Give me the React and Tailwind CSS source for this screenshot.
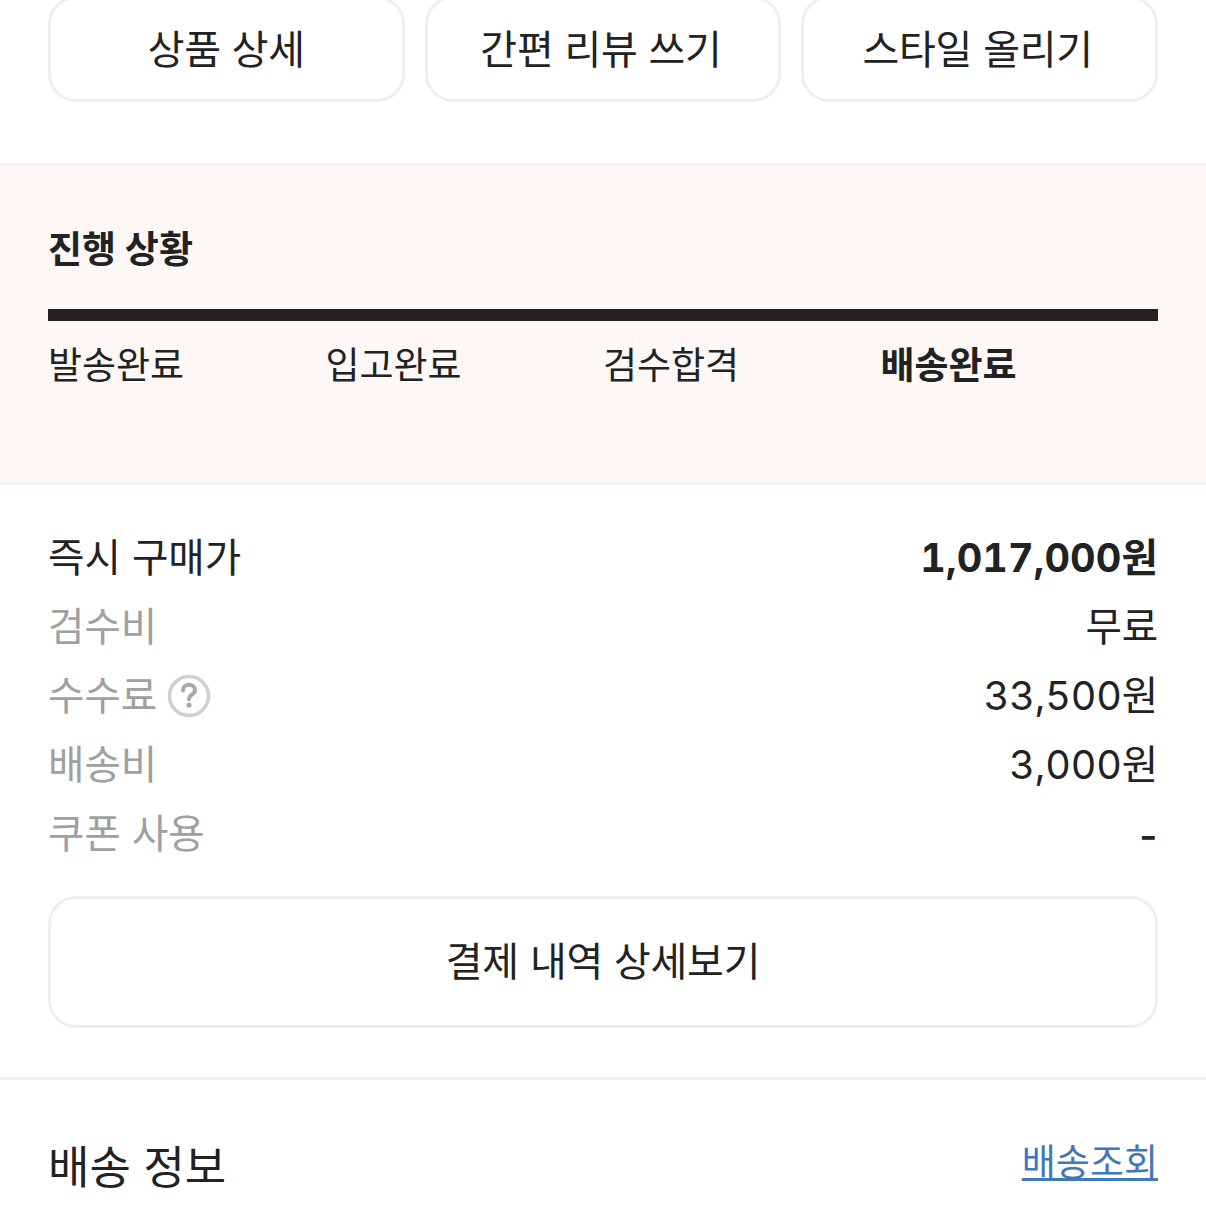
import React from 'react'

const font = "font-['Inter','Noto_Sans_CJK_KR',sans-serif]"

function ActionButton({ label, shift }) {
  return (
    <button className={`h-[106px] -mt-[4px] pt-[2px] border-[3px] border-[#eeeeee] rounded-[28px] bg-white text-[40px] tracking-[-0.25px] text-[#222] ${shift ? 'pr-[4px]' : ''}`}>
      {label}
    </button>
  )
}

function PriceRow({ label, value, strong, help, muted = true, dash }) {
  return (
    <div className="flex items-center justify-between h-[69px]">
      <div className={`flex items-center gap-[10px] text-[39.6px] ${muted ? 'text-[#a0a0a0]' : 'text-[#222]'}`}>
        {label}
        {help && (
          <svg width="44" height="44" viewBox="0 0 44 44" fill="none">
            <circle cx="22" cy="22" r="19.5" stroke="#cfcfcf" strokeWidth="3.5" />
            <path d="M16 16.5c0-3.6 2.6-5.7 6-5.7s6 2 6 5.1c0 2.4-1.3 3.6-3 4.7-1.8 1.2-3 2.1-3 4.6" stroke="#a8a8a8" strokeWidth="4" strokeLinecap="round" />
            <circle cx="22" cy="31" r="2.6" fill="#a8a8a8" />
          </svg>
        )}
      </div>
      <div className={`text-[39.6px] text-[#222] tabular-nums ${strong ? 'font-bold tracking-[0.1px]' : 'tracking-[-0.15px]'} ${dash ? 'pt-[5px] font-medium -mr-[3px]' : ''}`}>{value}</div>
    </div>
  )
}

export default function App() {
  return (
    <div className={`w-[1206px] h-[1206px] overflow-hidden bg-white ${font}`}>
      <div className="grid grid-cols-3 items-start gap-[20px] px-[48px] h-[163px]">
        <ActionButton label="상품 상세" />
        <ActionButton label="간편 리뷰 쓰기" shift />
        <ActionButton label="스타일 올리기" shift />
      </div>

      <div className="h-[322px] bg-[#fdf8f5] border-y-[3px] border-[#f0f0f0] px-[48px] pt-[59px]">
        <h2 className="text-[37px] leading-[50px] font-bold text-[#222]">진행 상황</h2>
        <div className="h-[12px] bg-[#222] mt-[34px]" />
        <div className="grid grid-cols-4 w-[1110px] mt-[20px] text-[37px] leading-[50px] text-[#222]">
          <span>발송완료</span>
          <span>입고완료</span>
          <span>검수합격</span>
          <span className="font-bold">배송완료</span>
        </div>
      </div>

      <div className="px-[48px] pt-[39px]">
        <PriceRow label="즉시 구매가" value="1,017,000원" strong muted={false} />
        <PriceRow label="검수비" value="무료" />
        <PriceRow label="수수료" value="33,500원" help />
        <PriceRow label="배송비" value="3,000원" />
        <PriceRow label="쿠폰 사용" value="-" dash />
        <button className="w-full h-[132px] mt-[27px] border-[3px] border-[#eeeeee] rounded-[28px] bg-white text-[40px] tracking-[-0.25px] text-[#222]">
          결제 내역 상세보기
        </button>
      </div>

      <div className="h-[3px] bg-[#f0f0f0] mt-[49px]" />

      <div className="flex justify-between px-[48px] h-[170px]">
        <h2 className="text-[45px] leading-[60px] text-[#222] mt-[58px]">배송 정보</h2>
        <a className="text-[37px] leading-[50px] h-[50px] mt-[58px] text-[#3f78b8] underline underline-offset-[2px]">배송조회</a>
      </div>
    </div>
  )
}
